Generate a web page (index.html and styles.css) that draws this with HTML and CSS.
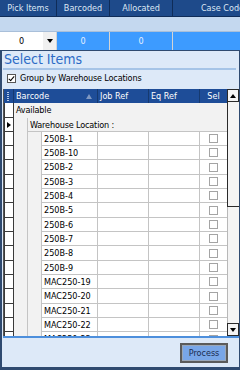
FILE: index.html
```html
<!DOCTYPE html>
<html lang="en">

<head>
    <meta charset="UTF-8" />
    <meta name="viewport" content="width=device-width, initial-scale=1.0" />
    <link rel="stylesheet" href="styles.css">
    <title>Select Items</title>
</head>

<body>
    <section class="picklist">
        <div class="pl-head">
            <div class="pl-col">Pick Items</div>
            <div class="pl-col">Barcoded</div>
            <div class="pl-col">Allocated</div>
            <div class="pl-col">Case Code</div>
        </div>
        <div class="pl-band"></div>
        <div class="pl-row">
            <div class="pl-cell combo">
                <span class="combo-val">0</span>
                <span class="combo-btn"><span class="tri-down"></span></span>
            </div>
            <div class="pl-cell hot">0</div>
            <div class="pl-cell hot">0</div>
            <div class="pl-cell hot"></div>
        </div>
    </section>

    <section class="dialog">
        <h1 class="dlg-title">Select Items</h1>
        <div class="dlg-rule"></div>
        <label class="dlg-check">
            <span class="check on"></span>
            Group by Warehouse Locations
        </label>

        <div class="grid">
            <div class="grid-main">
                <div class="g-head">
                    <div class="g-hcell grip"><span class="dots"></span></div>
                    <div class="g-hcell">Barcode <span class="sort"></span></div>
                    <div class="g-hcell">Job Ref</div>
                    <div class="g-hcell">Eq Ref</div>
                    <div class="g-hcell sel">Sel</div>
                </div>
                <div class="g-body">
                    <div class="g-group lvl1">
                        <div class="rowhdr"></div>
                        <div class="g-gtext">Available</div>
                    </div>
                    <div class="g-group lvl2">
                        <div class="rowhdr current"><span class="tri-right"></span></div>
                        <div class="indent"></div>
                        <div class="g-gtext">Warehouse Location :</div>
                    </div>
                    <div class="g-rows">
                        <div class="g-row"><div class="rowhdr"></div><div class="indent"></div><div class="indent"></div><div class="c">250B-1</div><div class="c"></div><div class="c"></div><div class="c sel"><span class="check"></span></div></div>
                        <div class="g-row"><div class="rowhdr"></div><div class="indent"></div><div class="indent"></div><div class="c">250B-10</div><div class="c"></div><div class="c"></div><div class="c sel"><span class="check"></span></div></div>
                        <div class="g-row"><div class="rowhdr"></div><div class="indent"></div><div class="indent"></div><div class="c">250B-2</div><div class="c"></div><div class="c"></div><div class="c sel"><span class="check"></span></div></div>
                        <div class="g-row"><div class="rowhdr"></div><div class="indent"></div><div class="indent"></div><div class="c">250B-3</div><div class="c"></div><div class="c"></div><div class="c sel"><span class="check"></span></div></div>
                        <div class="g-row"><div class="rowhdr"></div><div class="indent"></div><div class="indent"></div><div class="c">250B-4</div><div class="c"></div><div class="c"></div><div class="c sel"><span class="check"></span></div></div>
                        <div class="g-row"><div class="rowhdr"></div><div class="indent"></div><div class="indent"></div><div class="c">250B-5</div><div class="c"></div><div class="c"></div><div class="c sel"><span class="check"></span></div></div>
                        <div class="g-row"><div class="rowhdr"></div><div class="indent"></div><div class="indent"></div><div class="c">250B-6</div><div class="c"></div><div class="c"></div><div class="c sel"><span class="check"></span></div></div>
                        <div class="g-row"><div class="rowhdr"></div><div class="indent"></div><div class="indent"></div><div class="c">250B-7</div><div class="c"></div><div class="c"></div><div class="c sel"><span class="check"></span></div></div>
                        <div class="g-row"><div class="rowhdr"></div><div class="indent"></div><div class="indent"></div><div class="c">250B-8</div><div class="c"></div><div class="c"></div><div class="c sel"><span class="check"></span></div></div>
                        <div class="g-row"><div class="rowhdr"></div><div class="indent"></div><div class="indent"></div><div class="c">250B-9</div><div class="c"></div><div class="c"></div><div class="c sel"><span class="check"></span></div></div>
                        <div class="g-row"><div class="rowhdr"></div><div class="indent"></div><div class="indent"></div><div class="c">MAC250-19</div><div class="c"></div><div class="c"></div><div class="c sel"><span class="check"></span></div></div>
                        <div class="g-row"><div class="rowhdr"></div><div class="indent"></div><div class="indent"></div><div class="c">MAC250-20</div><div class="c"></div><div class="c"></div><div class="c sel"><span class="check"></span></div></div>
                        <div class="g-row"><div class="rowhdr"></div><div class="indent"></div><div class="indent"></div><div class="c">MAC250-21</div><div class="c"></div><div class="c"></div><div class="c sel"><span class="check"></span></div></div>
                        <div class="g-row"><div class="rowhdr"></div><div class="indent"></div><div class="indent"></div><div class="c">MAC250-22</div><div class="c"></div><div class="c"></div><div class="c sel"><span class="check"></span></div></div>
                        <div class="g-row"><div class="rowhdr"></div><div class="indent"></div><div class="indent"></div><div class="c">MAC250-23</div><div class="c"></div><div class="c"></div><div class="c sel"><span class="check"></span></div></div>
                    </div>
                </div>
            </div>
            <div class="vscroll">
                <div class="sb-btn"><span class="tri-up"></span></div>
                <div class="sb-track">
                    <div class="sb-thumb"></div>
                </div>
                <div class="sb-btn"><span class="tri-down"></span></div>
            </div>
        </div>

        <div class="dlg-foot">
            <button type="button" class="btn-process">Process</button>
        </div>
    </section>
</body>

</html>
```
FILE: styles.css
```css
* {
    margin: 0;
    padding: 0;
    box-sizing: border-box;
}

html,
body {
    width: 240px;
    height: 370px;
    overflow: hidden;
}

body {
    font-family: "DejaVu Sans Condensed", "DejaVu Sans", sans-serif;
    font-size: 9px;
    color: #000000;
    background-color: #ffffff;
}

/* background list */
.pl-head,
.pl-row {
    display: grid;
    grid-template-columns: 57px 53px 63px 100px;
    width: 273px;
}

.pl-head {
    height: 17px;
    background-color: #1e4a8a;
    border-bottom: 1px solid #0f2c58;
}

.pl-col {
    color: #dde7f4;
    text-align: center;
    line-height: 16px;
    border-right: 1px solid #0f2c58;
    white-space: nowrap;
}

.pl-band {
    height: 15px;
    background-color: #c4d8ef;
    border-bottom: 1px solid #a9bfd9;
}

.pl-row {
    height: 18px;
}

.pl-cell {
    line-height: 18px;
    text-align: center;
    border-right: 1px solid #d4d4d4;
}

.pl-cell.hot {
    background-color: #3d9bff;
    color: #e4f1ff;
}

.combo {
    display: flex;
    background-color: #ffffff;
}

.combo-val {
    flex: 1;
    color: #000000;
}

.combo-btn {
    width: 13px;
    display: flex;
    align-items: center;
    justify-content: center;
    background-color: #f0f0f0;
}

.tri-down,
.tri-up,
.tri-right {
    display: block;
    width: 0;
    height: 0;
    border-style: solid;
}

.tri-down {
    border-width: 4px 3.5px 0 3.5px;
    border-color: #000000 transparent transparent transparent;
}

.tri-up {
    border-width: 0 3.5px 4px 3.5px;
    border-color: transparent transparent #000000 transparent;
}

.tri-right {
    border-width: 3.5px 0 3.5px 4px;
    border-color: transparent transparent transparent #000000;
}

/* dialog */
.dialog {
    height: 320px;
    background-color: #dde9f8;
    border: 1px solid #2f4a70;
    border-left-width: 2px;
    border-bottom-width: 3px;
    display: flex;
    flex-direction: column;
}

.dlg-title {
    font-size: 14px;
    font-weight: normal;
    color: #2c6bc6;
    height: 16px;
    line-height: 16px;
    padding-left: 2px;
}

.dlg-rule {
    height: 2px;
    margin: 1px 3px 0 1px;
    background-color: #a6c4e7;
}

.dlg-check {
    display: flex;
    align-items: center;
    gap: 4px;
    height: 16px;
    padding-left: 5px;
    letter-spacing: -0.15px;
}

.check {
    display: inline-block;
    width: 9px;
    height: 9px;
    background-color: #ffffff;
    border: 1px solid #a4a4a4;
}

.check.on {
    border-color: #555555;
    position: relative;
}

.check.on::after {
    content: "";
    position: absolute;
    left: 2px;
    top: 0;
    width: 2px;
    height: 5px;
    border: solid #000000;
    border-width: 0 1.5px 1.5px 0;
    transform: rotate(40deg);
}

/* grid */
.grid {
    display: flex;
    margin-top: 3px;
    margin-left: 1px;
    height: 249px;
    border-bottom: 2px solid #4d8fdc;
}

.grid-main {
    width: 224px;
    display: flex;
    flex-direction: column;
    border-left: 1px solid #555555;
}

.g-head {
    display: grid;
    grid-template-columns: 10px 84px 51px 51px 28px;
    height: 14px;
    background-color: #1e4d98;
}

.g-hcell {
    color: #ffffff;
    line-height: 14px;
    padding-left: 2px;
    border-right: 1px solid #163a70;
    display: flex;
    align-items: center;
    white-space: nowrap;
}

.g-hcell.sel {
    justify-content: center;
    padding-left: 0;
}

.grip {
    padding-left: 3px;
}

.dots {
    width: 2px;
    height: 9px;
    background-image: linear-gradient(#b5c8e6 50%, transparent 50%);
    background-size: 2px 2px;
}

.sort {
    margin-left: auto;
    margin-right: 5px;
    width: 0;
    height: 0;
    border-style: solid;
    border-width: 0 3px 5px 3px;
    border-color: transparent transparent #7f98c2 transparent;
}

.g-body {
    flex: 1;
    overflow: hidden;
    background-color: #f2f2f2;
}

.g-group {
    display: flex;
    height: 15px;
}

.g-group.lvl2 {
    height: 14px;
}

.rowhdr {
    width: 10px;
    flex: none;
    background-color: #ffffff;
    border-left: 1px solid #3a3a3a;
    border-right: 1px solid #3a3a3a;
    border-bottom: 1px solid #3a3a3a;
    display: flex;
    align-items: center;
    justify-content: center;
}

.indent {
    width: 14px;
    flex: none;
    border-right: 1px solid #c4c4c4;
}

.g-gtext {
    flex: 1;
    line-height: 14px;
    padding-left: 2px;
    white-space: nowrap;
    border-bottom: 1px solid #c4c4c4;
    letter-spacing: -0.15px;
}

.g-group.lvl1 .g-gtext {
    border-bottom: none;
}

.g-row {
    display: grid;
    grid-template-columns: 10px 14px 14px 56px 51px 51px 28px;
    height: 14px;
}

.g-row:nth-child(3n) {
    height: 15px;
}

.g-row .c {
    background-color: #ffffff;
    border-right: 1px solid #c4c4c4;
    border-bottom: 1px solid #c4c4c4;
    padding-left: 2px;
    display: flex;
    align-items: center;
    white-space: nowrap;
}

.g-row .c.sel {
    justify-content: center;
    padding-left: 0;
}

.g-row .indent {
    width: auto;
}

/* scrollbar */
.vscroll {
    width: 13px;
    display: flex;
    flex-direction: column;
    background-color: #f4f4f4;
}

.sb-btn {
    height: 13px;
    display: flex;
    align-items: center;
    justify-content: center;
    background-color: #f4f4f4;
    border: 1px solid #2a2a2a;
}

.sb-track {
    flex: 1;
    border-left: 1px solid #b8b8b8;
}

.sb-thumb {
    height: 105px;
    background-color: #f4f4f4;
    border-left: 1px solid #2a2a2a;
    border-bottom: 1px solid #2a2a2a;
    margin-left: -1px;
}

/* footer */
.dlg-foot {
    flex: 1;
    display: flex;
    justify-content: flex-end;
    align-items: center;
    padding-right: 11px;
}

.btn-process {
    width: 48px;
    height: 20px;
    font-family: inherit;
    font-size: 9px;
    color: #1a2b4f;
    background-color: #78a6e8;
    border: 2px solid #5b5b5b;
    box-shadow: inset 0 0 0 1px #9aa7b8;
}
```
